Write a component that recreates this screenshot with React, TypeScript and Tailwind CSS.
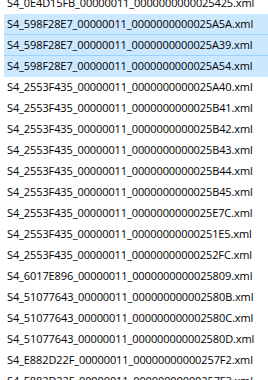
const files = [
  "S4_0E4D15FB_00000011_0000000000025425.xml",
  "S4_598F28E7_00000011_0000000000025A5A.xml",
  "S4_598F28E7_00000011_0000000000025A39.xml",
  "S4_598F28E7_00000011_0000000000025A54.xml",
  "S4_2553F435_00000011_0000000000025A40.xml",
  "S4_2553F435_00000011_0000000000025B41.xml",
  "S4_2553F435_00000011_0000000000025B42.xml",
  "S4_2553F435_00000011_0000000000025B43.xml",
  "S4_2553F435_00000011_0000000000025B44.xml",
  "S4_2553F435_00000011_0000000000025B45.xml",
  "S4_2553F435_00000011_0000000000025E7C.xml",
  "S4_2553F435_00000011_00000000000251E5.xml",
  "S4_2553F435_00000011_00000000000252FC.xml",
  "S4_6017E896_00000011_0000000000025809.xml",
  "S4_51077643_00000011_000000000002580B.xml",
  "S4_51077643_00000011_000000000002580C.xml",
  "S4_51077643_00000011_000000000002580D.xml",
  "S4_E882D22F_00000011_00000000000257F2.xml",
  "S4_E882D22F_00000011_00000000000257F3.xml",
];

const selected = [1, 2, 3];

export default function App() {
  return (
    <div className="w-[268px] h-[380px] overflow-hidden bg-white">
      {/* file list, scrolled a little so the first row is cut */}
      <ul className="-mt-[7px] pl-[4px] flex flex-col font-['Open_Sans',sans-serif] text-[11px] tracking-[-0.1px] text-black">
        {files.map((name, i) => {
          const isSel = selected.includes(i);
          const nextSel = selected.includes(i + 1);
          return (
            <li
              key={name + i}
              className={`h-[21px] flex items-center px-[3px] whitespace-nowrap ${
                isSel ? "bg-[#cce8ff]" : ""
              } ${isSel && nextSel ? "border-b border-[#99d1ff]" : ""}`}
            >
              {name}
            </li>
          );
        })}
      </ul>
    </div>
  );
}
